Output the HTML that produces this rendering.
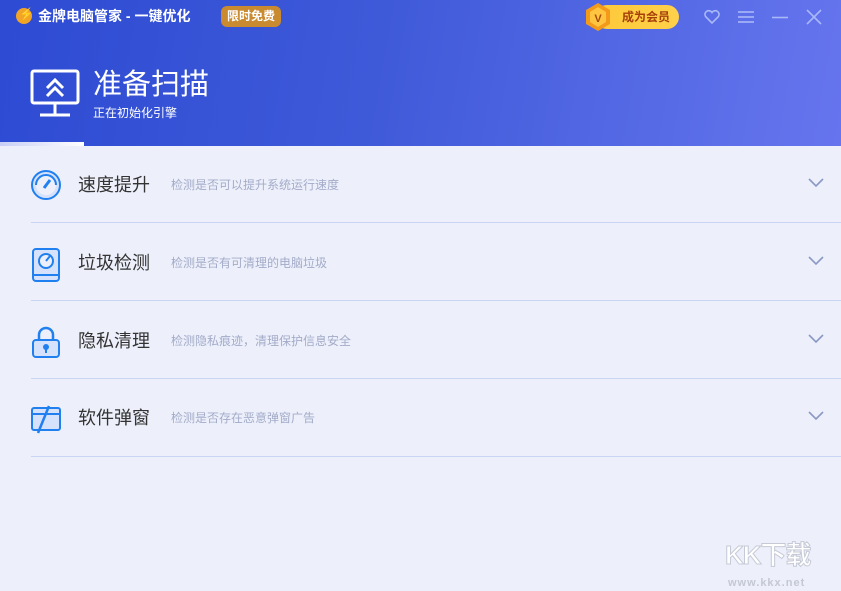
<!DOCTYPE html>
<html><head><meta charset="utf-8"><style>
*{margin:0;padding:0;box-sizing:border-box}
body{width:841px;height:591px;overflow:hidden;background:#edf0fb;font-family:"Liberation Sans","Noto Sans CJK SC",sans-serif;position:relative}
.hdr{position:absolute;left:0;top:0;width:841px;height:146px;background:linear-gradient(100deg,#2d4bd3 0%,#3f5ad9 45%,#6675ee 100%)}
.abs{position:absolute}
.row{position:absolute;left:0;width:841px;height:78px}
.row .t{position:absolute;left:78px;top:0;font-size:18px;color:#333;line-height:78px}
.row .d{position:absolute;left:171px;top:0;font-size:12px;color:#a3abc8;line-height:78px}
.row .ic{position:absolute;left:30px;top:23px}
.row .ch{position:absolute;left:807px;top:31px}
.line{position:absolute;left:31px;width:810px;height:1px;background:#c9d3f2}
</style></head><body>
<div class="hdr"></div>
<div class="abs" style="left:16px;top:8px;width:16px;height:16px;border-radius:50%;background:#f2a426"></div>
<div class="abs" style="left:19px;top:7px;color:#fff;font-size:12px;font-weight:bold">⚡</div>
<div class="abs" style="left:38px;top:7px;color:#fff;font-size:14px;font-weight:bold;line-height:18px">金牌电脑管家 - 一键优化</div>
<div class="abs" style="left:221px;top:6px;width:60px;height:21px;border-radius:6px;background:#c98a30;color:#fff;font-size:12px;font-weight:bold;line-height:21px;text-align:center">限时免费</div>
<div class="abs" style="left:595px;top:5px;width:84px;height:24px;border-radius:12px;background:linear-gradient(90deg,#ffc93a,#ffd04a);color:#a6400b;font-size:12px;font-weight:bold;line-height:24px;padding-left:27px">成为会员</div>
<svg class="abs" style="left:584px;top:2px" width="28" height="30"><polygon points="14,1 26,8 26,22 14,29 2,22 2,8" fill="#f39a1a"/><polygon points="14,5 22,10 22,20 14,25 6,20 6,10" fill="#ffc440"/><text x="14" y="20" text-anchor="middle" font-size="11" font-weight="bold" fill="#a44a0b" font-family="Liberation Sans">V</text></svg>
<svg class="abs" style="left:703px;top:9px" width="18" height="16"><path d="M9 14 L2.5 7.5 A3.5 3.5 0 0 1 9 3.5 A3.5 3.5 0 0 1 15.5 7.5 Z" fill="none" stroke="#a9b8f8" stroke-width="1.6"/></svg>
<svg class="abs" style="left:737px;top:10px" width="18" height="14" stroke="#a9b8f8" stroke-width="1.6"><line x1="1" y1="2" x2="17" y2="2"/><line x1="1" y1="7" x2="17" y2="7"/><line x1="1" y1="12" x2="17" y2="12"/></svg>
<svg class="abs" style="left:771px;top:10px" width="18" height="14" stroke="#a9b8f8" stroke-width="1.6"><line x1="1" y1="7.5" x2="17" y2="7.5"/></svg>
<svg class="abs" style="left:806px;top:9px" width="16" height="16" stroke="#a9b8f8" stroke-width="1.6"><line x1="1" y1="1" x2="15" y2="15"/><line x1="15" y1="1" x2="1" y2="15"/></svg>
<svg class="abs" style="left:30px;top:69px" width="52" height="50" fill="none" stroke="#fff" stroke-width="3"><rect x="2" y="2" width="46" height="32" rx="2"/><line x1="25" y1="34" x2="25" y2="45"/><line x1="10" y1="46" x2="40" y2="46"/><polyline points="17,19 25,11 33,19"/><polyline points="17,27 25,19 33,27"/></svg>
<div class="abs" style="left:93px;top:67px;color:#fff;font-size:29px;line-height:36px">准备扫描</div>
<div class="abs" style="left:93px;top:105px;color:#fff;font-size:12px;line-height:16px">正在初始化引擎</div>
<div class="abs" style="left:0;top:142px;width:84px;height:4px;background:linear-gradient(90deg,#c8cff5,#fff)"></div>

<div class="row" style="top:146px"><svg class="ic" width="32" height="32"><circle cx="16" cy="16" r="14" fill="#d6e2fb" stroke="#2180f0" stroke-width="2"/><circle cx="16" cy="16" r="10" fill="#edf0fb"/><path d="M6 16 A10 10 0 0 1 26 16" fill="none" stroke="#2180f0" stroke-width="2"/><line x1="14" y1="19" x2="20" y2="11" stroke="#2180f0" stroke-width="3"/></svg><div class="t">速度提升</div><div class="d">检测是否可以提升系统运行速度</div><svg class="ch" width="18" height="12"><polyline points="2,2 9,9 16,2" fill="none" stroke="#8a98c4" stroke-width="1.6"/></svg></div>
<div class="line" style="top:222px"></div>
<div class="row" style="top:224px"><svg class="ic" width="32" height="36"><rect x="3" y="2" width="26" height="32" rx="3" fill="#d6e2fb" stroke="#2180f0" stroke-width="2"/><line x1="3" y1="28" x2="29" y2="28" stroke="#2180f0" stroke-width="2"/><circle cx="16" cy="14" r="7" fill="#edf0fb" stroke="#2180f0" stroke-width="2"/><line x1="16" y1="14" x2="20" y2="9" stroke="#2180f0" stroke-width="2"/></svg><div class="t">垃圾检测</div><div class="d">检测是否有可清理的电脑垃圾</div><svg class="ch" width="18" height="12"><polyline points="2,2 9,9 16,2" fill="none" stroke="#8a98c4" stroke-width="1.6"/></svg></div>
<div class="line" style="top:300px"></div>
<div class="row" style="top:302px"><svg class="ic" width="32" height="36"><path d="M9 15 V10 A7 7 0 0 1 23 10 V15" fill="none" stroke="#2180f0" stroke-width="2.5"/><rect x="3" y="15" width="26" height="17" rx="3" fill="#d6e2fb" stroke="#2180f0" stroke-width="2"/><circle cx="16" cy="22" r="3" fill="#2180f0"/><line x1="16" y1="23" x2="16" y2="28" stroke="#2180f0" stroke-width="2"/></svg><div class="t">隐私清理</div><div class="d">检测隐私痕迹，清理保护信息安全</div><svg class="ch" width="18" height="12"><polyline points="2,2 9,9 16,2" fill="none" stroke="#8a98c4" stroke-width="1.6"/></svg></div>
<div class="line" style="top:378px"></div>
<div class="row" style="top:379px"><svg class="ic" width="32" height="36"><rect x="2" y="6" width="28" height="22" rx="2" fill="#d6e2fb" stroke="#2180f0" stroke-width="2"/><line x1="2" y1="12" x2="30" y2="12" stroke="#2180f0" stroke-width="2"/><line x1="8" y1="31" x2="19" y2="4" stroke="#2180f0" stroke-width="2.5"/></svg><div class="t">软件弹窗</div><div class="d">检测是否存在恶意弹窗广告</div><svg class="ch" width="18" height="12"><polyline points="2,2 9,9 16,2" fill="none" stroke="#8a98c4" stroke-width="1.6"/></svg></div>
<div class="line" style="top:456px"></div>
<div class="abs" style="left:725px;top:535px;font-size:26px;font-weight:bold;color:#fff;-webkit-text-stroke:1px #c6cad6;letter-spacing:-1px">KK下载</div>
<div class="abs" style="left:728px;top:577px;font-size:11px;font-weight:bold;color:#c4c8d2;letter-spacing:1px">www.kkx.net</div>
</body></html>
